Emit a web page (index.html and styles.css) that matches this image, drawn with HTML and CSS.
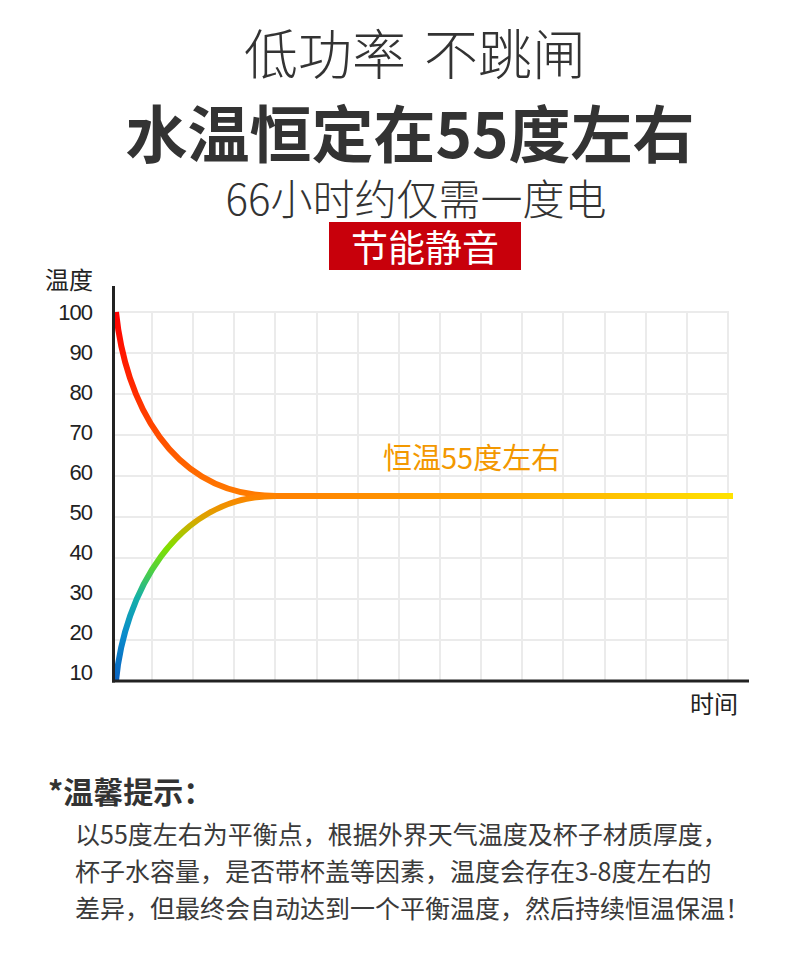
FILE: index.html
```html
<!DOCTYPE html>
<html lang="zh-CN">
<head>
<meta charset="utf-8">
<title>低功率 不跳闸</title>
<link rel="stylesheet" href="styles.css">
</head>
<body>
<div class="page">
  <header class="hero">
    <h1 class="t1">低功率 不跳闸</h1>
    <h2 class="t2">水温恒定在55度左右</h2>
    <p class="t3">66小时约仅需一度电</p>
    <div class="badge-row"><div class="badge">节能静音</div></div>
  </header>

  <section class="chart">
    <div class="chart-head">温度</div>
    <div class="plot">
      <ul class="ticks">
        <li>100</li><li>90</li><li>80</li><li>70</li><li>60</li>
        <li>50</li><li>40</li><li>30</li><li>20</li><li>10</li>
      </ul>
      <svg class="grid" width="678" height="400" viewBox="0 0 678 400" xmlns="http://www.w3.org/2000/svg">
        <defs>
          <linearGradient id="gUp" gradientUnits="userSpaceOnUse" x1="0" y1="26" x2="0" y2="210">
            <stop offset="0" stop-color="#ff0000"/>
            <stop offset="0.45" stop-color="#ff2e00"/>
            <stop offset="1" stop-color="#ff7c00"/>
          </linearGradient>
          <linearGradient id="gLow" gradientUnits="userSpaceOnUse" x1="0" y1="395" x2="0" y2="210">
            <stop offset="0" stop-color="#0a62c0"/>
            <stop offset="0.25" stop-color="#0a8ccc"/>
            <stop offset="0.45" stop-color="#14b0a8"/>
            <stop offset="0.6" stop-color="#50d040"/>
            <stop offset="0.72" stop-color="#80e000"/>
            <stop offset="0.87" stop-color="#d8a800"/>
            <stop offset="1" stop-color="#ff8200"/>
          </linearGradient>
          <linearGradient id="gFlat" gradientUnits="userSpaceOnUse" x1="163" y1="0" x2="621" y2="0">
            <stop offset="0" stop-color="#ff8000"/>
            <stop offset="0.5" stop-color="#ffa400"/>
            <stop offset="1" stop-color="#ffe300"/>
          </linearGradient>
        </defs>
        <g stroke="#ebebeb" stroke-width="2" fill="none">
          <line x1="3" y1="26" x2="617" y2="26"/>
          <line x1="3" y1="67" x2="617" y2="67"/>
          <line x1="3" y1="108" x2="617" y2="108"/>
          <line x1="3" y1="149" x2="617" y2="149"/>
          <line x1="3" y1="190" x2="617" y2="190"/>
          <line x1="3" y1="231" x2="617" y2="231"/>
          <line x1="3" y1="272" x2="617" y2="272"/>
          <line x1="3" y1="313" x2="617" y2="313"/>
          <line x1="3" y1="354" x2="617" y2="354"/>
          <line x1="40" y1="25" x2="40" y2="395"/>
          <line x1="81" y1="25" x2="81" y2="395"/>
          <line x1="122" y1="25" x2="122" y2="395"/>
          <line x1="163" y1="25" x2="163" y2="395"/>
          <line x1="205" y1="25" x2="205" y2="395"/>
          <line x1="246" y1="25" x2="246" y2="395"/>
          <line x1="287" y1="25" x2="287" y2="395"/>
          <line x1="328" y1="25" x2="328" y2="395"/>
          <line x1="369" y1="25" x2="369" y2="395"/>
          <line x1="410" y1="25" x2="410" y2="395"/>
          <line x1="451" y1="25" x2="451" y2="395"/>
          <line x1="493" y1="25" x2="493" y2="395"/>
          <line x1="534" y1="25" x2="534" y2="395"/>
          <line x1="575" y1="25" x2="575" y2="395"/>
          <line x1="616" y1="25" x2="616" y2="395"/>
        </g>
        <g fill="none" stroke-width="6">
          <path d="M163 210 L621 210" stroke="url(#gFlat)"/>
          <path d="M4 26 C13 114 58 210 164 210" stroke="url(#gUp)"/>
          <path d="M4 395 C12 309 63 210 164 210" stroke="url(#gLow)"/>
        </g>
        <g stroke="#222" stroke-width="3" fill="none">
          <line x1="1.5" y1="0" x2="1.5" y2="396.5"/>
          <line x1="0" y1="395" x2="637" y2="395"/>
        </g>
      </svg>
    </div>
    <div class="chart-foot">时间</div>
    <div class="note">恒温55度左右</div>
  </section>

  <section class="tips">
    <h3 class="tips-title">*温馨提示：</h3>
    <p class="tips-text">以55度左右为平衡点，根据外界天气温度及杯子材质厚度，<br>杯子水容量，是否带杯盖等因素，温度会存在3-8度左右的<br>差异，但最终会自动达到一个平衡温度，然后持续恒温保温！</p>
  </section>
</div>
</body>
</html>
```

FILE: styles.css
```css
html, body {
  margin: 0;
  padding: 0;
  background: #ffffff;
}

body {
  font-family: "Noto Sans CJK SC", "Noto Sans", sans-serif;
  color: #333333;
}

.page {
  width: 790px;
}

/* ---------- hero ---------- */
.hero {
  padding: 25px 0 0 30px;
  text-align: center;
}

.t1 {
  margin: 0;
  padding-left: 10px;
  font-size: 54px;
  line-height: 54px;
  font-weight: 300;
  word-spacing: 6px;
  color: #333333;
}

.t2 {
  margin: 21px 0 0;
  font-size: 62px;
  line-height: 62px;
  font-weight: 700;
  color: #333333;
}

.t3 {
  margin: 14px 0 0;
  padding-left: 12px;
  font-size: 42px;
  line-height: 42px;
  font-weight: 300;
  color: #333333;
}

.badge-row {
  display: flex;
  justify-content: center;
  margin-top: 4px;
  padding-left: 30px;
}

.badge {
  background: #c8000b;
  color: #ffffff;
  font-size: 37px;
  line-height: 48px;
  padding: 0 22px;
}

/* ---------- chart ---------- */
.chart {
  position: relative;
  margin-top: -5px;
}

.chart-head {
  height: 21px;
  padding-left: 45px;
  font-size: 24px;
  line-height: 28px;
  color: #222222;
}

.plot {
  display: flex;
  align-items: flex-start;
}

.ticks {
  width: 112px;
  box-sizing: border-box;
  margin: 0;
  padding: 7px 20px 0 0;
  list-style: none;
  text-align: right;
  font-family: "Liberation Sans", Arial, sans-serif;
  font-size: 22px;
  line-height: 40px;
  letter-spacing: -1px;
  color: #222222;
}

.ticks li {
  height: 40px;
}

.grid {
  display: block;
  width: 678px;
  height: 400px;
}

.chart-foot {
  margin-top: -4px;
  height: 28px;
  padding-right: 52px;
  text-align: right;
  font-size: 24px;
  line-height: 28px;
  color: #222222;
}

.note {
  position: absolute;
  left: 383px;
  top: 177px;
  font-size: 29px;
  line-height: 29px;
  color: #f39800;
}

/* ---------- tips ---------- */
.tips {
  margin-top: 58px;
}

.tips-title {
  margin: 0;
  padding-left: 48px;
  font-size: 30px;
  line-height: 30px;
  font-weight: 700;
  color: #333333;
}

.tips-text {
  margin: 10px 0 0;
  padding-left: 75px;
  font-size: 25px;
  line-height: 37px;
  color: #3a3a3a;
}
```
